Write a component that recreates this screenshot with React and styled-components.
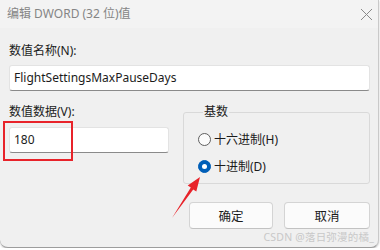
import React from "react";
import styled, { createGlobalStyle } from "styled-components";

const GlobalStyle = createGlobalStyle`
  html, body {
    margin: 0;
    padding: 0;
    background: #ffffff;
  }
  body {
    font-family: "Noto Sans", "Noto Sans CJK SC", sans-serif;
    font-size: 12px;
    color: #1b1b1b;
  }
`;

const Window = styled.div`
  position: relative;
  width: 379px;
  height: 248px;
  box-sizing: border-box;
  background: #f0f0f0;
  border-right: 1px solid #c9c9c9;
  border-bottom: 1px solid #9d9d9d;
  border-radius: 0 0 8px 8px;
  box-shadow: 0 1px 2px rgba(0, 0, 0, 0.25);
  overflow: hidden;
`;

const TitleBar = styled.div`
  height: 28px;
  display: flex;
  align-items: center;
  justify-content: space-between;
  padding: 0 5px 0 7px;
  background: #f3f3f3;
`;

const Title = styled.span`
  font-size: 12px;
  line-height: 16px;
  color: #858585;
`;

const Body = styled.div`
  display: flex;
  flex-direction: column;
  padding: 15px 8px 0 9px;
`;

const Label = styled.div`
  line-height: 16px;
  height: 16px;
`;

const TextInput = styled.div`
  box-sizing: border-box;
  width: ${(props) => (props.$width ? props.$width + "px" : "100%")};
  height: 26px;
  margin-top: ${(props) => props.$top || 6}px;
  padding: 0 4px;
  display: flex;
  align-items: center;
  background: #ffffff;
  border: 1px solid #e3e3e3;
  border-bottom-color: #8a8a8a;
  border-radius: 3px;
  font-size: 12px;
  line-height: 16px;
  color: #1b1b1b;
`;

const Row = styled.div`
  display: flex;
  gap: 14px;
  margin-top: 13px;
`;

const Column = styled.div`
  display: flex;
  flex-direction: column;
`;

const GroupBox = styled.fieldset`
  box-sizing: border-box;
  width: 188px;
  height: 80px;
  margin: 0;
  padding: 9px 0 0 14px;
  border: 1px solid #d9d9d9;
  border-radius: 3px;
  display: flex;
  flex-direction: column;
  gap: 7px;
`;

const Legend = styled.legend`
  margin-left: 5px;
  padding: 0 1px;
  line-height: 16px;
  font-size: 12px;
`;

const RadioRow = styled.div`
  display: flex;
  align-items: center;
  height: 20px;
  gap: 3px;
`;

const RadioDot = styled.span`
  box-sizing: border-box;
  width: 13px;
  height: 13px;
  border-radius: 50%;
  background: ${(props) => (props.$checked ? "#005fb8" : "#fbfbfb")};
  border: 1px solid ${(props) => (props.$checked ? "#005fb8" : "#5f5f5f")};
  display: flex;
  align-items: center;
  justify-content: center;

  &::after {
    content: "";
    display: ${(props) => (props.$checked ? "block" : "none")};
    width: 5px;
    height: 5px;
    border-radius: 50%;
    background: #ffffff;
  }
`;

const Buttons = styled.div`
  display: flex;
  justify-content: flex-end;
  gap: 11px;
  margin-top: 18px;
`;

const Button = styled.div`
  box-sizing: border-box;
  width: ${(props) => props.$width}px;
  height: 27px;
  display: flex;
  align-items: center;
  justify-content: center;
  background: #fbfbfb;
  border: 1px solid #d4d4d4;
  border-bottom-color: #c2c2c2;
  border-radius: 4px;
  font-size: 12.5px;
`;

const Watermark = styled.div`
  position: absolute;
  right: 4px;
  bottom: 3px;
  font-size: 10.5px;
  line-height: 14px;
  color: #c8c8c8;
  letter-spacing: 0.2px;
`;

const Overlay = styled.svg`
  position: absolute;
  left: 0;
  top: 0;
  pointer-events: none;
`;

const CloseIcon = () => (
  <svg width="13" height="13" viewBox="0 0 13 13">
    <path d="M1 1 L12 12 M12 1 L1 12" stroke="#8a8a8a" strokeWidth="1" fill="none" />
  </svg>
);

const Radio = ({ checked, children }) => (
  <RadioRow>
    <RadioDot $checked={checked} />
    <span>{children}</span>
  </RadioRow>
);

export default function App() {
  return (
    <>
      <GlobalStyle />
      <Window>
        <TitleBar>
          <Title>编辑 DWORD (32 位)值</Title>
          <CloseIcon />
        </TitleBar>
        <Body>
          <Label>数值名称(N):</Label>
          <TextInput>FlightSettingsMaxPauseDays</TextInput>
          <Row>
            <Column>
              <Label>数值数据(V):</Label>
              <TextInput $width={160} $top={7}>180</TextInput>
            </Column>
            <GroupBox>
              <Legend>基数</Legend>
              <Radio>十六进制(H)</Radio>
              <Radio checked>十进制(D)</Radio>
            </GroupBox>
          </Row>
          <Buttons>
            <Button $width={84}>确定</Button>
            <Button $width={86}>取消</Button>
          </Buttons>
        </Body>
        <Watermark>CSDN @落日弥漫的橘_</Watermark>
        <Overlay width="379" height="248" viewBox="0 0 379 248">
          <rect x="4" y="122" width="68" height="38" fill="none" stroke="#e8232a" strokeWidth="2" />
          <polygon
            points="172,218 193.2,189.4 196.3,191.6 200,177 187.7,185.4 190.8,187.6"
            fill="#e8232a"
          />
        </Overlay>
      </Window>
    </>
  );
}
